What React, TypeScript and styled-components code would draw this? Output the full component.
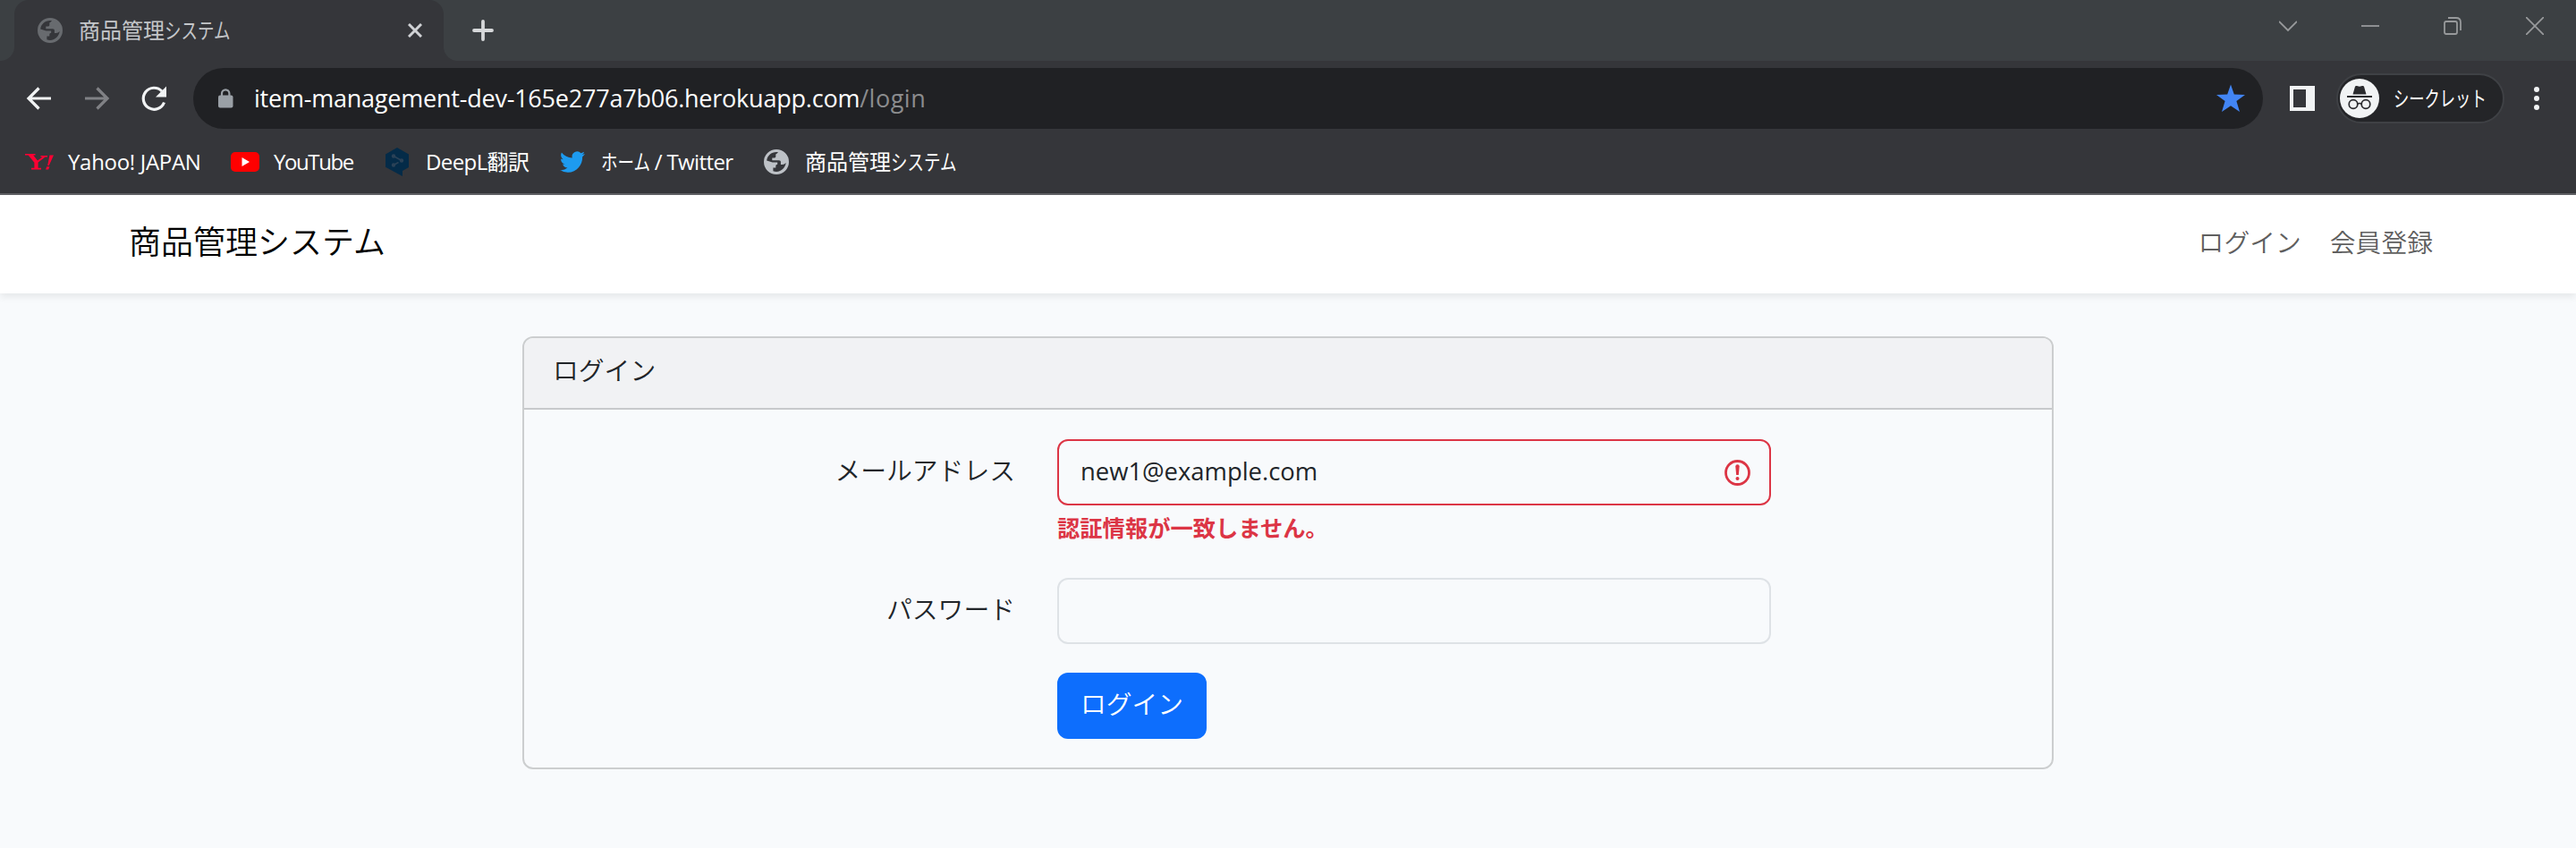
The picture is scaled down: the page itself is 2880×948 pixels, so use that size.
import React from "react";
import styled, { createGlobalStyle } from "styled-components";

const uiFont = `"Open Sans", "Noto Sans CJK JP", sans-serif`;
const pageFont = `"Open Sans", "Noto Sans CJK JP", sans-serif`;

const GlobalStyle = createGlobalStyle`
  *, *::before, *::after { box-sizing: border-box; }
  body { margin: 0; background: #f8fafc; overflow: hidden; }
  svg { display: block; flex: none; }
`;

const Screen = styled.div`
  width: 2880px;
  height: 948px;
  display: flex;
  flex-direction: column;
  overflow: hidden;
`;

/* ---------- browser window ---------- */

const TabStrip = styled.div`
  height: 68px;
  display: flex;
  align-items: flex-start;
  justify-content: space-between;
  padding-left: 16px;
  background: #3c4043;
`;

const Tabs = styled.div`
  display: flex;
  height: 68px;
`;

const Tab = styled.div`
  position: relative;
  width: 480px;
  height: 68px;
  display: flex;
  align-items: center;
  padding: 0 24px 0 26px;
  border-radius: 16px 16px 0 0;
  background: #35363a;
  &::before, &::after {
    content: "";
    position: absolute;
    bottom: 0;
    width: 16px;
    height: 16px;
  }
  &::before {
    left: -16px;
    background: radial-gradient(circle at 0 0, transparent 15.5px, #35363a 16.5px);
  }
  &::after {
    right: -16px;
    background: radial-gradient(circle at 100% 0, transparent 15.5px, #35363a 16.5px);
  }
`;

const Label = styled.span<{ $w: number; $ml?: number; $ls?: number; $color?: string }>`
  display: block;
  width: ${(p) => p.$w}px;
  margin-left: ${(p) => p.$ml ?? 0}px;
  letter-spacing: ${(p) => p.$ls ?? 0}px;
  color: ${(p) => p.$color ?? "#fff"};
  font: 400 24px/36px ${uiFont};
  white-space: nowrap;
`;

const Kana = styled.span<{ $w: number; $scale?: number }>`
  display: inline-block;
  width: ${(p) => p.$w}px;
  letter-spacing: 0;
  white-space: nowrap;
  transform: scaleX(${(p) => p.$scale ?? 0.77});
  transform-origin: left center;
`;

const TabClose = styled.div`
  margin-left: auto;
`;

const NewTab = styled.div`
  margin: 22px 0 0 32px;
`;

const WindowButtons = styled.div`
  display: flex;
  gap: 72px;
  padding: 19px 36px 0 0;
`;

const Toolbar = styled.div`
  height: 84px;
  display: flex;
  align-items: center;
  padding: 0 36px 0 28px;
  background: #35363a;
`;

const NavButtons = styled.div`
  display: flex;
  gap: 32px;
  width: 188px;
`;

const Omnibox = styled.div`
  width: 2314px;
  height: 68px;
  display: flex;
  align-items: center;
  padding: 0 20px 0 28px;
  border-radius: 34px;
  background: #202124;
`;

const Url = styled.span`
  flex: 1;
  margin-left: 23px;
  color: #fff;
  font: 400 27px/40px ${uiFont};
  letter-spacing: -0.22px;
  white-space: nowrap;
`;

const UrlPath = styled.span`
  color: #8b8c8e;
  letter-spacing: 0.5px;
`;

const SidePanelButton = styled.div`
  width: 28px;
  height: 28px;
  margin-left: 30px;
  border: 4px solid #f1f3f4;
  border-right-width: 10px;
  background: #35363a;
`;

const IncognitoPill = styled.div`
  width: 188px;
  height: 56px;
  display: flex;
  align-items: center;
  margin-left: 24px;
  padding-left: 2px;
  border: 2px solid #3f4145;
  border-radius: 28px;
  background: #242528;
`;

const MenuDots = styled.div`
  display: flex;
  flex-direction: column;
  gap: 4px;
  margin-left: 33px;
`;

const Dot = styled.i`
  width: 6px;
  height: 6px;
  border-radius: 50%;
  background: #f1f3f4;
`;

const BookmarkBar = styled.div`
  height: 66px;
  display: flex;
  align-items: center;
  padding: 0 0 6px 28px;
  border-bottom: 2px solid #5f6064;
  background: #35363a;
  svg { margin-bottom: 1px; }
`;

/* ---------- web page ---------- */

const Page = styled.div`
  flex: 1;
  background: #f8fafc;
  color: #212529;
  font: 350 28.8px/46px ${pageFont};
`;

const Navbar = styled.header`
  position: relative;
  height: 110px;
  display: flex;
  align-items: center;
  justify-content: space-between;
  padding: 0 160px 4px 144px;
  background: #fff;
  box-shadow: 0 4px 8px rgba(0, 0, 0, 0.075);
`;

const Brand = styled.div`
  color: #000;
  font-size: 36px;
`;

const NavLinks = styled.nav`
  display: flex;
  gap: 32px;
  color: rgba(0, 0, 0, 0.65);
`;

const Card = styled.section`
  width: 1712px;
  height: 484px;
  margin: 48px auto 0;
  border: 2px solid #cccecf;
  border-radius: 12px;
  overflow: hidden;
`;

const CardHeader = styled.div`
  height: 80px;
  padding: 13px 32px;
  border-bottom: 2px solid #c7c9cb;
  background: #f1f2f4;
`;

const CardBody = styled.div`
  display: flex;
  flex-direction: column;
  padding-top: 33px;
`;

const Row = styled.div<{ $h: number }>`
  height: ${(p) => p.$h}px;
  display: grid;
  grid-template-columns: 549px 798px;
  column-gap: 47px;
  align-items: start;
`;

const FieldLabel = styled.label`
  padding-top: 12px;
  text-align: right;
`;

const Field = styled.div<{ $invalid?: boolean }>`
  height: 74px;
  display: flex;
  align-items: center;
  justify-content: space-between;
  padding: 0 21px 0 24px;
  border: 2px solid ${(p) => (p.$invalid ? "#dc3545" : "#dee2e6")};
  border-radius: 12px;
`;

const FieldValue = styled.span`
  padding-bottom: 2px;
  font-size: 27.4px;
  font-weight: 400;
`;

const ErrorText = styled.div`
  margin-top: 5px;
  color: #dc3545;
  font-size: 25.3px;
  font-weight: 700;
  line-height: 40px;
  white-space: nowrap;
`;

const SubmitButton = styled.button`
  grid-column: 2;
  width: 167px;
  height: 74px;
  padding: 0 0 5px;
  border: 0;
  border-radius: 12px;
  background: #0d6efd;
  color: #fff;
  font: inherit;
`;

/* ---------- icons ---------- */

const Globe = ({ color, size = 28 }: { color: string; size?: number }) => (
  <svg width={size} height={size} viewBox="0 0 28 28">
    <path
      fillRule="evenodd"
      fill={color}
      d="M14 0a14 14 0 1 0 0 28a14 14 0 0 0 0-28zM16 3.1c-.7 1-1.7 1.900-2.700 2.400v2.600c0 .9-.5 1.400-1.400 1.400h-2.600v2.800h7.700c1.100 0 1.900.7 1.900 1.700v2.900h1.900c1.500 0 2.700-.8 3.900-2c-.5 4.900-4.800 9.800-10.700 10c-1.300 0-2.600-.2-3.600-.6v-3.800h2.900v-1.900c0-1.100.8-1.900 1.900-1.900v-2.200H9.600L3.200 12.600C3.700 7.200 8.300 3 14 3z"
    />
  </svg>
);

const Back = ({ color, flip }: { color: string; flip?: boolean }) => (
  <svg width="32" height="32" viewBox="0 0 32 32" fill="none" stroke={color} strokeWidth="3.2">
    <path d={flip ? "M3 16H27M16.500 4.500L28 16L16.500 27.500" : "M29 16H5M15.500 4.500L4 16L15.500 27.500"} />
  </svg>
);

const Reload = () => (
  <svg width="32" height="32" viewBox="0 0 32 32">
    <path d="M27.500 20.500A12 12 0 1 1 25 8" fill="none" stroke="#f1f3f4" strokeWidth="3.200" />
    <path d="M30 2.500V14.500H18Z" fill="#f1f3f4" />
  </svg>
);

const Lock = () => (
  <svg width="17" height="22" viewBox="0 0 17 22">
    <rect x="0" y="7.500" width="16.500" height="14" rx="2" fill="#9aa0a6" />
    <path d="M4 9V5.500a4.200 4.200 0 0 1 8.400 0V9" fill="none" stroke="#9aa0a6" strokeWidth="2.200" />
  </svg>
);

const Star = () => (
  <svg width="32" height="32" viewBox="0 0 32 32">
    <path fill="#4285f4" d="M16 .5L19.800 11.400L32 11.900L22.400 19L26 31L16 24.200L6 31L9.600 19L0 11.900L12.200 11.400Z" />
  </svg>
);

const Incognito = () => (
  <svg width="44" height="44" viewBox="0 0 44 44">
    <circle cx="22" cy="22" r="22" fill="#f1f3f4" />
    <path fill="#2a2b2e" d="M17 8.800c.5-1 1.200-1 2-.7l3 .7l3-.7c.8-.3 1.500-.3 2 .7L29.500 17.500H14.500zM8 19h28v2H8z" />
    <g fill="none" stroke="#2a2b2e" strokeWidth="1.700">
      <circle cx="15" cy="28.500" r="4.800" />
      <circle cx="29" cy="28.500" r="4.800" />
      <path d="M19.800 28.200c1.400-.9 3-.9 4.400 0" />
    </g>
  </svg>
);

const Yahoo = () => (
  <svg width="32" height="20" viewBox="0 0 32 20" fill="#ff0033">
    <path d="M0 1H11.500V2.600H9.200L14 8.600L19.500 4.600H17.500V3H25V4.600H22.600L14.600 10.600V16.800H18V18.400H7V16.800H10.400V10.800L3.600 2.600H0Z" />
    <path d="M27.500 2.500H32L26.800 14H25.200ZM24.300 15.200H27.400L26.200 18.600H23.100Z" />
  </svg>
);

const YouTube = () => (
  <svg width="32" height="24" viewBox="0 0 32 24">
    <rect y="1" width="32" height="22" rx="5" fill="#f00" />
    <path d="M12.500 7L21 12L12.500 17Z" fill="#fff" />
  </svg>
);

const DeepL = () => (
  <svg width="26" height="32" viewBox="0 0 26 32">
    <path d="M13 0L26 7.500V22L19 26V32L0 21.800V7.500Z" fill="#042b48" />
    <g fill="#2b4257">
      <circle cx="9" cy="9.500" r="2.200" />
      <circle cx="18" cy="14.500" r="2.200" />
      <circle cx="9" cy="19.500" r="2.200" />
    </g>
    <path d="M9 9.500L18 14.500M9 19.500L14.500 16.500" stroke="#2b4257" strokeWidth="1.500" />
  </svg>
);

const Twitter = () => (
  <svg width="28" height="24" viewBox="0 2 24 20" preserveAspectRatio="none">
    <path
      fill="#1d9bf0"
      d="M23.950 4.570a10 10 0 0 1-2.820.77 4.960 4.960 0 0 0 2.160-2.720c-.95.560-2 .960-3.130 1.190a4.920 4.920 0 0 0-8.380 4.480C7.690 8.090 4.070 6.130 1.640 3.160a4.820 4.820 0 0 0-.67 2.480c0 1.710.87 3.210 2.190 4.100a4.900 4.900 0 0 1-2.230-.62v.060a4.920 4.920 0 0 0 3.950 4.830 5 5 0 0 1-2.210.08 4.940 4.940 0 0 0 4.600 3.420A9.870 9.870 0 0 1 0 19.540a14 14 0 0 0 7.550 2.210c9.050 0 14-7.500 14-13.980 0-.21 0-.42-.02-.63a9.940 9.940 0 0 0 2.460-2.550z"
    />
  </svg>
);

const InvalidIcon = () => (
  <svg width="29" height="29" viewBox="0 0 29 29">
    <circle cx="14.500" cy="14.500" r="13" fill="none" stroke="#dc3545" strokeWidth="2.800" />
    <path d="M12.300 7.500a1.500 1.500 0 0 1 4.400 0L15.800 17H13.200Z" fill="#dc3545" />
    <circle cx="14.500" cy="21" r="2" fill="#dc3545" />
  </svg>
);

const WinIcon = ({ d }: { d: string }) => (
  <svg width="20" height="20" viewBox="0 0 20 20" fill="none" stroke="#97999b" strokeWidth="1.800">
    <path d={d} />
  </svg>
);

const SystemTitle = () => (
  <>
    商品管理<Kana $w={73}>システム</Kana>
  </>
);

export default function App() {
  return (
    <Screen>
      <GlobalStyle />
      <TabStrip>
        <Tabs>
          <Tab>
            <Globe color="#686b6f" />
            <Label $w={170} $ml={18} $color="#c4c6c9">
              <SystemTitle />
            </Label>
            <TabClose>
              <svg width="16" height="16" viewBox="0 0 16 16" stroke="#d0d2d5" strokeWidth="3">
                <path d="M1 1L15 15M15 1L1 15" />
              </svg>
            </TabClose>
          </Tab>
          <NewTab>
            <svg width="24" height="24" viewBox="0 0 24 24" stroke="#d6d8da" strokeWidth="3.800" strokeLinecap="round">
              <path d="M12 2V22M2 12H22" />
            </svg>
          </NewTab>
        </Tabs>
        <WindowButtons>
          <WinIcon d="M0 5L10 15L20 5" />
          <WinIcon d="M0 10H20" />
          <WinIcon d="M3 5H13Q15 5 15 7V17Q15 19 13 19H3Q1 19 1 17V7Q1 5 3 5ZM5 1H14Q19 1 19 6V15" />
          <WinIcon d="M0 0L20 20M20 0L0 20" />
        </WindowButtons>
      </TabStrip>
      <Toolbar>
        <NavButtons>
          <Back color="#f1f3f4" />
          <Back color="#808185" flip />
          <Reload />
        </NavButtons>
        <Omnibox>
          <Lock />
          <Url>
            item-management-dev-165e277a7b06.herokuapp.com<UrlPath>/login</UrlPath>
          </Url>
          <Star />
        </Omnibox>
        <SidePanelButton />
        <IncognitoPill>
          <Incognito />
          <Label $w={102} $ml={16}>
            <Kana $w={102} $scale={0.72}>シークレット</Kana>
          </Label>
        </IncognitoPill>
        <MenuDots>
          <Dot />
          <Dot />
          <Dot />
        </MenuDots>
      </Toolbar>
      <BookmarkBar>
        <Yahoo />
        <Label $w={182} $ml={16} $ls={-0.3}>Yahoo! JAPAN</Label>
        <YouTube />
        <Label $w={125} $ml={16} $ls={-1.4}>YouTube</Label>
        <DeepL />
        <Label $w={150} $ml={19} $ls={-0.6}>DeepL翻訳</Label>
        <Twitter />
        <Label $w={182} $ml={18} $ls={-0.6}>
          <Kana $w={54}>ホーム</Kana> / Twitter
        </Label>
        <Globe color="#bdc1c6" />
        <Label $w={170} $ml={18}>
          <SystemTitle />
        </Label>
      </BookmarkBar>
      <Page>
        <Navbar>
          <Brand>商品管理システム</Brand>
          <NavLinks>
            <span>ログイン</span>
            <span>会員登録</span>
          </NavLinks>
        </Navbar>
        <Card>
          <CardHeader>ログイン</CardHeader>
          <CardBody>
            <Row $h={155}>
              <FieldLabel>メールアドレス</FieldLabel>
              <div>
                <Field $invalid>
                  <FieldValue>new1@example.com</FieldValue>
                  <InvalidIcon />
                </Field>
                <ErrorText>認証情報が一致しません。</ErrorText>
              </div>
            </Row>
            <Row $h={106}>
              <FieldLabel>パスワード</FieldLabel>
              <Field />
            </Row>
            <Row $h={74}>
              <SubmitButton>ログイン</SubmitButton>
            </Row>
          </CardBody>
        </Card>
      </Page>
    </Screen>
  );
}
